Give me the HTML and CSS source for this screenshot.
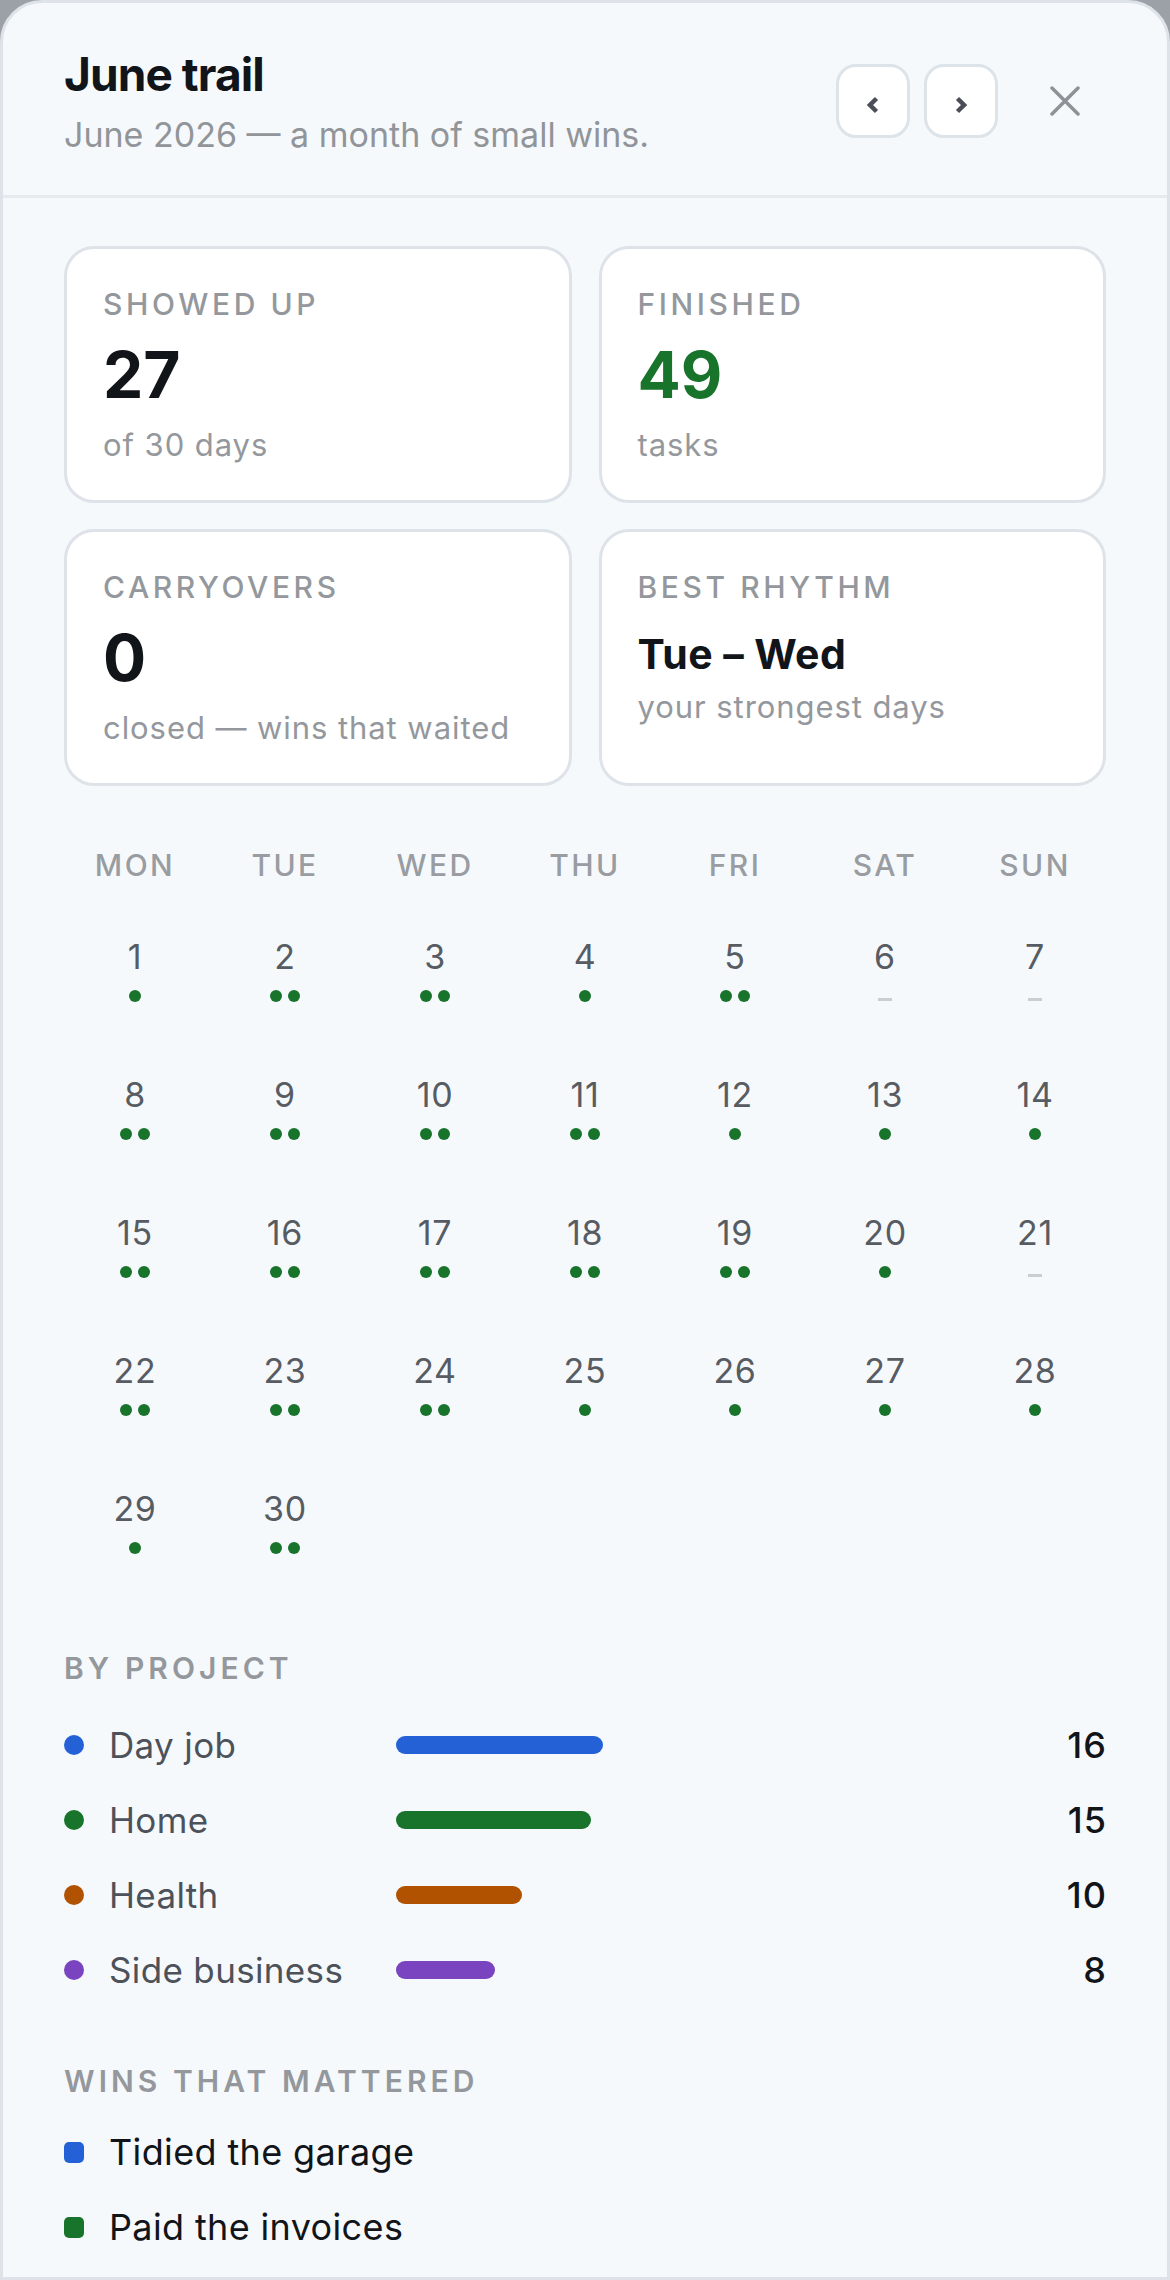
FILE: index.html
```html
<!DOCTYPE html>
<html lang="en">
<head>
  <meta charset="UTF-8">
  <meta name="viewport" content="width=device-width, initial-scale=1.0">
  <title>June trail</title>
  <link rel="stylesheet" href="styles.css">
</head>
<body>
  <div class="panel">
    <header class="head">
      <div class="head-text">
        <h1 class="title">June trail</h1>
        <p class="subtitle">June 2026 — a month of small wins.</p>
      </div>
      <div class="actions">
        <button class="nav-btn" aria-label="Previous month">
          <svg width="12" height="18" viewBox="0 0 12 18"><polyline points="9.5,2.5 3,9 9.5,15.5" /></svg>
        </button>
        <button class="nav-btn" aria-label="Next month">
          <svg width="12" height="18" viewBox="0 0 12 18"><polyline points="2.5,2.5 9,9 2.5,15.5" /></svg>
        </button>
        <button class="close-btn" aria-label="Close">
          <svg width="30" height="30" viewBox="0 0 30 30"><path d="M2 2 L28 28 M28 2 L2 28" /></svg>
        </button>
      </div>
    </header>

    <main class="content">
      <!-- Month summary -->
      <section class="stats">
        <div class="stat">
          <div class="stat-label">Showed up</div>
          <div class="stat-value">27</div>
          <div class="stat-note">of 30 days</div>
        </div>
        <div class="stat">
          <div class="stat-label">Finished</div>
          <div class="stat-value green">49</div>
          <div class="stat-note">tasks</div>
        </div>
        <div class="stat">
          <div class="stat-label">Carryovers</div>
          <div class="stat-value">0</div>
          <div class="stat-note">closed — wins that waited</div>
        </div>
        <div class="stat">
          <div class="stat-label">Best rhythm</div>
          <div class="stat-value small">Tue – Wed</div>
          <div class="stat-note">your strongest days</div>
        </div>
      </section>

      <!-- Calendar: one dot per finished block, dash for rest days -->
      <section class="calendar">
        <div class="weekdays">
          <span>Mon</span><span>Tue</span><span>Wed</span><span>Thu</span><span>Fri</span><span>Sat</span><span>Sun</span>
        </div>
        <div class="days">
          <div class="day"><span class="num">1</span><span class="dots"><i class="dot"></i></span></div>
          <div class="day"><span class="num">2</span><span class="dots"><i class="dot"></i><i class="dot"></i></span></div>
          <div class="day"><span class="num">3</span><span class="dots"><i class="dot"></i><i class="dot"></i></span></div>
          <div class="day"><span class="num">4</span><span class="dots"><i class="dot"></i></span></div>
          <div class="day"><span class="num">5</span><span class="dots"><i class="dot"></i><i class="dot"></i></span></div>
          <div class="day"><span class="num">6</span><span class="dots"><i class="dash"></i></span></div>
          <div class="day"><span class="num">7</span><span class="dots"><i class="dash"></i></span></div>

          <div class="day"><span class="num">8</span><span class="dots"><i class="dot"></i><i class="dot"></i></span></div>
          <div class="day"><span class="num">9</span><span class="dots"><i class="dot"></i><i class="dot"></i></span></div>
          <div class="day"><span class="num">10</span><span class="dots"><i class="dot"></i><i class="dot"></i></span></div>
          <div class="day"><span class="num">11</span><span class="dots"><i class="dot"></i><i class="dot"></i></span></div>
          <div class="day"><span class="num">12</span><span class="dots"><i class="dot"></i></span></div>
          <div class="day"><span class="num">13</span><span class="dots"><i class="dot"></i></span></div>
          <div class="day"><span class="num">14</span><span class="dots"><i class="dot"></i></span></div>

          <div class="day"><span class="num">15</span><span class="dots"><i class="dot"></i><i class="dot"></i></span></div>
          <div class="day"><span class="num">16</span><span class="dots"><i class="dot"></i><i class="dot"></i></span></div>
          <div class="day"><span class="num">17</span><span class="dots"><i class="dot"></i><i class="dot"></i></span></div>
          <div class="day"><span class="num">18</span><span class="dots"><i class="dot"></i><i class="dot"></i></span></div>
          <div class="day"><span class="num">19</span><span class="dots"><i class="dot"></i><i class="dot"></i></span></div>
          <div class="day"><span class="num">20</span><span class="dots"><i class="dot"></i></span></div>
          <div class="day"><span class="num">21</span><span class="dots"><i class="dash"></i></span></div>

          <div class="day"><span class="num">22</span><span class="dots"><i class="dot"></i><i class="dot"></i></span></div>
          <div class="day"><span class="num">23</span><span class="dots"><i class="dot"></i><i class="dot"></i></span></div>
          <div class="day"><span class="num">24</span><span class="dots"><i class="dot"></i><i class="dot"></i></span></div>
          <div class="day"><span class="num">25</span><span class="dots"><i class="dot"></i></span></div>
          <div class="day"><span class="num">26</span><span class="dots"><i class="dot"></i></span></div>
          <div class="day"><span class="num">27</span><span class="dots"><i class="dot"></i></span></div>
          <div class="day"><span class="num">28</span><span class="dots"><i class="dot"></i></span></div>

          <div class="day"><span class="num">29</span><span class="dots"><i class="dot"></i></span></div>
          <div class="day"><span class="num">30</span><span class="dots"><i class="dot"></i><i class="dot"></i></span></div>
        </div>
      </section>

      <section class="projects">
        <h2 class="section-title">By project</h2>
        <ul class="project-list">
          <li class="project">
            <span class="swatch blue"></span><span class="project-name">Day job</span>
            <span class="track"><span class="bar blue" style="width: 207px"></span></span>
            <span class="count">16</span>
          </li>
          <li class="project">
            <span class="swatch green"></span><span class="project-name">Home</span>
            <span class="track"><span class="bar green" style="width: 195px"></span></span>
            <span class="count">15</span>
          </li>
          <li class="project">
            <span class="swatch orange"></span><span class="project-name">Health</span>
            <span class="track"><span class="bar orange" style="width: 126px"></span></span>
            <span class="count">10</span>
          </li>
          <li class="project">
            <span class="swatch purple"></span><span class="project-name">Side business</span>
            <span class="track"><span class="bar purple" style="width: 99px"></span></span>
            <span class="count">8</span>
          </li>
        </ul>
      </section>

      <section class="wins">
        <h2 class="section-title">Wins that mattered</h2>
        <ul class="win-list">
          <li class="win"><span class="marker blue"></span>Tidied the garage</li>
          <li class="win"><span class="marker green"></span>Paid the invoices</li>
        </ul>
      </section>
    </main>
  </div>
</body>
</html>
```

FILE: styles.css
```css
/* Page */
body {
  margin: 0;
  background: #9ba1a7;
  font-family: Inter, "Noto Sans", sans-serif;
  color: #111418;
}

.panel {
  box-sizing: border-box;
  width: 1170px;
  height: 2280px;
  background: #f6f9fc;
  border: 3px solid #dde3e9;
  border-radius: 42px 42px 0 0;
  overflow: hidden;
}

/* Header */
.head {
  display: flex;
  justify-content: space-between;
  align-items: center;
  padding: 43px 61px 39px;
  border-bottom: 3px solid #e5eaee;
}
.title {
  margin: 0;
  font-size: 46px;
  line-height: 56px;
  font-weight: 700;
  letter-spacing: -0.02em;
}
.subtitle {
  margin: 12px 0 0;
  font-size: 34px;
  line-height: 42px;
  color: #919599;
}

.actions {
  display: flex;
  align-items: center;
  gap: 14px;
  margin-right: 13px;
}
.nav-btn {
  display: grid;
  place-items: center;
  width: 74px;
  height: 74px;
  padding: 0;
  background: #fff;
  border: 3px solid #dce3e9;
  border-radius: 20px;
}
.nav-btn svg {
  margin-top: 7px;
  fill: none;
  stroke: #4a4f57;
  stroke-width: 4.5;
}
.close-btn {
  display: grid;
  place-items: center;
  width: 56px;
  height: 56px;
  margin-left: 25px;
  padding: 0;
  background: none;
  border: 0;
}
.close-btn svg {
  stroke: #8d9297;
  stroke-width: 3.5;
  stroke-linecap: round;
}

/* Body */
.content { padding: 48px 61px; }

/* Stat cards */
.stats {
  display: grid;
  grid-template-columns: 1fr 1fr;
  gap: 26px 27px;
}
.stat {
  background: #fff;
  border: 3px solid #dde3e9;
  border-radius: 30px;
  padding: 37px 37px 37px 36px;
}
.stat-label {
  font-size: 30px;
  line-height: 36px;
  font-weight: 500;
  letter-spacing: 0.12em;
  text-transform: uppercase;
  color: #94989d;
}
.stat-value {
  margin-top: 14px;
  font-size: 64px;
  line-height: 77px;
  font-weight: 700;
}
.stat-value.green { color: #18732b; }
.stat-value.small {
  margin-top: 25px;
  font-size: 41px;
  line-height: 48px;
  letter-spacing: 0.01em;
}
.stat-note {
  margin-top: 14px;
  font-size: 31px;
  line-height: 36px;
  letter-spacing: 0.03em;
  color: #94989d;
}
.stat-value.small + .stat-note { margin-top: 11px; }

/* Calendar */
.calendar { margin: 61px -4px 0; }
.weekdays, .days {
  display: grid;
  grid-template-columns: repeat(7, 1fr);
  text-align: center;
}
.weekdays span {
  font-size: 30px;
  line-height: 36px;
  font-weight: 500;
  letter-spacing: 0.08em;
  text-transform: uppercase;
  color: #999da2;
}
.days {
  margin-top: 54px;
  row-gap: 73px;
}
.day {
  display: flex;
  flex-direction: column;
  align-items: center;
}
.num {
  font-size: 34px;
  line-height: 40px;
  letter-spacing: 0.02em;
  color: #575c63;
}
.dots {
  display: flex;
  gap: 6px;
  height: 12px;
  margin-top: 13px;
}
.dot {
  width: 12px;
  height: 12px;
  border-radius: 50%;
  background: #18732b;
}
.dash {
  align-self: flex-end;
  width: 14px;
  height: 3px;
  margin-bottom: 1px;
  background: #cacdd1;
}

/* Sections below the calendar */
.section-title {
  margin: 0;
  font-size: 30px;
  line-height: 36px;
  font-weight: 600;
  letter-spacing: 0.135em;
  text-transform: uppercase;
  color: #94989d;
}
.projects { margin-top: 96px; }
.project-list, .win-list {
  list-style: none;
  margin: 34px 0 0;
  padding: 0;
  display: flex;
  flex-direction: column;
  gap: 25px;
}
.project {
  display: grid;
  grid-template-columns: 20px 262px 1fr auto;
  column-gap: 25px;
  align-items: center;
  height: 50px;
  font-size: 35px;
  line-height: 50px;
  letter-spacing: 0.01em;
}
.swatch {
  width: 20px;
  height: 20px;
  border-radius: 50%;
}
.project-name { color: #4d525a; }
.bar {
  display: block;
  height: 18px;
  border-radius: 9px;
}
.count {
  font-size: 36px;
  font-weight: 500;
  letter-spacing: 0.03em;
  text-align: right;
  margin-right: -1px;
}

.wins { margin-top: 68px; }
.win-list { margin-top: 28px; }
.win {
  display: flex;
  align-items: center;
  gap: 25px;
  height: 50px;
  font-size: 36px;
  line-height: 50px;
  letter-spacing: 0.01em;
}
.marker {
  width: 20px;
  height: 21px;
  border-radius: 5px;
}

/* Project colours */
.blue { background: #2461d6; }
.green { background: #18732b; }
.orange { background: #b05200; }
.purple { background: #7a43bf; }
.stat-value.green { background: none; }
```
